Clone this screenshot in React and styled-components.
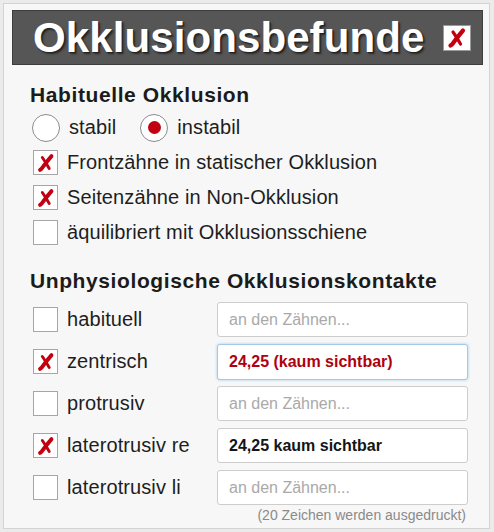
import styled, { createGlobalStyle } from "styled-components";

const GlobalStyle = createGlobalStyle`
  body {
    margin: 0;
    background: #ebebeb;
    font-family: "Liberation Sans", Arial, sans-serif;
  }
`;

const RED = "#c20010";

function XMark({ size = 24 }) {
  return (
    <svg width={size} height={size} viewBox="0 0 24 24">
      <path
        d="M8 6 C10.5 9.5 13 13.5 15.5 18"
        stroke={RED}
        strokeWidth="3.2"
        strokeLinecap="round"
        fill="none"
      />
      <path
        d="M18 4.5 C14.5 8.5 11 13 7 18.5 L5.5 19.5"
        stroke={RED}
        strokeWidth="4.2"
        strokeLinecap="round"
        strokeLinejoin="round"
        fill="none"
      />
    </svg>
  );
}

function Check({ checked }) {
  return <CheckBox>{checked && <XMark size={22} />}</CheckBox>;
}

function Radio({ checked }) {
  return <RadioCircle>{checked && <RadioDot />}</RadioCircle>;
}

const habitual = [
  { label: "Frontzähne in statischer Okklusion", checked: true },
  { label: "Seitenzähne in Non-Okklusion", checked: true },
  { label: "äquilibriert mit Okklusionsschiene", checked: false },
];

const contacts = [
  { label: "habituell", checked: false, value: "" },
  { label: "zentrisch", checked: true, value: "24,25 (kaum sichtbar)", tone: "red", focus: true },
  { label: "protrusiv", checked: false, value: "" },
  { label: "laterotrusiv re", checked: true, value: "24,25 kaum sichtbar", tone: "dark" },
  { label: "laterotrusiv li", checked: false, value: "" },
];

export default function App() {
  return (
    <>
      <GlobalStyle />
      <Panel>
        <TitleBar>
          <Title>Okklusionsbefunde</Title>
          <CloseBox>
            <XMark size={24} />
          </CloseBox>
        </TitleBar>

        <Section>
          <Heading $top={18} $bottom={3}>Habituelle Okklusion</Heading>
          <Row $pad={2}>
            <Radio />
            <Label>stabil</Label>
            <RadioSpacer />
            <Radio checked />
            <Label>instabil</Label>
          </Row>
          {habitual.map((item) => (
            <Row key={item.label} $pad={3}>
              <Check checked={item.checked} />
              <Label>{item.label}</Label>
            </Row>
          ))}

          <Heading $top={19} $bottom={9}>Unphysiologische Okklusionskontakte</Heading>
          <FieldList>
            {contacts.map((item) => (
              <FieldRow key={item.label}>
                <Check checked={item.checked} />
                <FieldLabel>{item.label}</FieldLabel>
                <TextField
                  readOnly
                  value={item.value}
                  placeholder="an den Zähnen..."
                  $tone={item.tone}
                  $focus={item.focus}
                />
              </FieldRow>
            ))}
          </FieldList>
          <Hint>(20 Zeichen werden ausgedruckt)</Hint>
        </Section>
      </Panel>
    </>
  );
}

const Panel = styled.div`
  margin: 3px 4px 0 3px;
  border: 1px solid #d3d3d3;
  background: #f7f7f7;
  padding: 6px 6px 5px 8px;
`;

const TitleBar = styled.div`
  height: 55px;
  box-sizing: border-box;
  background: #565656;
  border: 1px solid #3d3d3d;
  display: flex;
  align-items: center;
  justify-content: space-between;
  padding: 0 11px 0 20px;
`;

const Title = styled.h1`
  margin: 0;
  font-size: 42px;
  line-height: 48px;
  font-weight: bold;
  color: #fff;
  letter-spacing: 0.1px;
  text-shadow: 1px 1px 0 #222, 2px 2px 2px #2a2a2a;
`;

const CloseBox = styled.span`
  width: 28px;
  height: 26px;
  box-sizing: border-box;
  background: #fff;
  border: 1px solid #9a9a9a;
  display: flex;
  align-items: center;
  justify-content: center;
`;

const Section = styled.section`
  padding-left: 18px;
`;

const Heading = styled.h2`
  margin: ${(p) => p.$top}px 0 ${(p) => p.$bottom}px;
  font-size: 21px;
  line-height: 24px;
  font-weight: bold;
  letter-spacing: 0.6px;
  color: #1b1b1b;
`;

const Row = styled.div`
  display: flex;
  align-items: center;
  height: 35px;
  padding-left: ${(p) => p.$pad}px;
`;

const Label = styled.span`
  margin-left: 9px;
  font-size: 20px;
  color: #1e1e1e;
  letter-spacing: 0.1px;
  white-space: nowrap;
`;

const RadioSpacer = styled.span`
  width: 24px;
`;

const RadioCircle = styled.span`
  width: 28px;
  height: 28px;
  box-sizing: border-box;
  border-radius: 50%;
  border: 1px solid #8c8c8c;
  background: #fff;
  display: flex;
  align-items: center;
  justify-content: center;
  flex-shrink: 0;
`;

const RadioDot = styled.span`
  width: 13px;
  height: 13px;
  border-radius: 50%;
  background: ${RED};
`;

const CheckBox = styled.span`
  width: 25px;
  height: 25px;
  box-sizing: border-box;
  border: 1px solid #a6a6a6;
  background: #fff;
  display: flex;
  align-items: center;
  justify-content: center;
  flex-shrink: 0;
`;

const FieldList = styled.div`
  display: flex;
  flex-direction: column;
  gap: 7px;
`;

const FieldRow = styled.div`
  display: flex;
  align-items: center;
  height: 35px;
  padding-left: 3px;
`;

const FieldLabel = styled(Label)`
  width: 150px;
`;

const TextField = styled.input`
  width: 251px;
  height: ${(p) => (p.$focus ? 36 : 35)}px;
  box-sizing: border-box;
  border: 1px solid ${(p) => (p.$focus ? "#9fcbe8" : "#cdcdcd")};
  box-shadow: ${(p) => (p.$focus ? "0 0 3px rgba(110, 175, 225, 0.6)" : "none")};
  border-radius: 3px;
  background: #fff;
  padding: 0 11px;
  font-family: "Liberation Sans", Arial, sans-serif;
  font-size: 16px;
  font-weight: ${(p) => (p.$tone ? "bold" : "normal")};
  color: ${(p) => (p.$tone === "red" ? "#b0000e" : "#151515")};
  outline: none;

  &::placeholder {
    color: #a9a9a9;
    font-weight: normal;
  }
`;

const Hint = styled.div`
  margin-top: 2px;
  padding-right: 17px;
  text-align: right;
  font-size: 14px;
  line-height: 16px;
  color: #8a8a8a;
`;
